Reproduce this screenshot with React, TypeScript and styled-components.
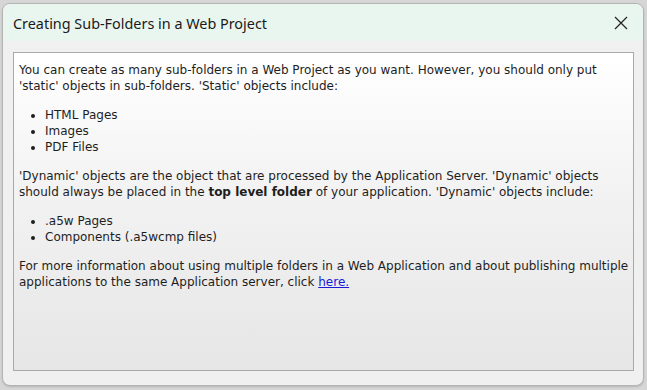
import React from 'react';
import styled, { createGlobalStyle } from 'styled-components';

const GlobalStyle = createGlobalStyle`
  html, body {
    margin: 0;
    padding: 0;
    background: #d6d6d6;
  }
`;

const Page = styled.div`
  width: 647px;
  height: 390px;
  padding: 3px 3px 4px 2px;
  box-sizing: border-box;
  display: flex;
`;

const Window = styled.div`
  flex: 1;
  display: flex;
  flex-direction: column;
  background: #f0f0f0;
  border: 1px solid #b4b4b4;
  border-radius: 8px;
  overflow: hidden;
  box-shadow: 0 1px 2px rgba(0, 0, 0, 0.15);
`;

const TitleBar = styled.div`
  height: 37px;
  flex-shrink: 0;
  display: flex;
  align-items: center;
  justify-content: space-between;
  padding: 1px 14px 0 10px;
  box-sizing: border-box;
  background: #e9f6ef;
`;

const Title = styled.div`
  font-family: 'Noto Sans', 'Open Sans', sans-serif;
  font-size: 14.4px;
  color: #1a1a1a;
`;

const CloseButton = styled.button`
  border: none;
  background: none;
  padding: 0;
  width: 16px;
  height: 16px;
  display: flex;
  align-items: center;
  justify-content: center;
  cursor: pointer;
`;

const Body = styled.div`
  flex: 1;
  display: flex;
  padding: 11px 10px 14px 10px;
`;

const Panel = styled.div`
  flex: 1;
  border: 1px solid #a9a9a9;
  background: linear-gradient(to bottom, #ffffff 0%, #f2f2f2 45%, #e6e6e6 100%);
  padding: 9px 5px 0 5px;
  font-family: 'DejaVu Sans', sans-serif;
  font-size: 12px;
  line-height: 16px;
  color: #1e1e1e;
  white-space: nowrap;
`;

const Paragraph = styled.p`
  margin: 0 0 13px 0;
`;

const BulletList = styled.ul`
  margin: 0 0 13px 0;
  padding: 0 0 0 26px;
  list-style: disc;
`;

const Link = styled.a`
  color: #1a1ad6;
  text-decoration: underline;
`;

const Notes: React.FC = () => (
  <Page>
    <GlobalStyle />
    <Window>
      <TitleBar>
        <Title>Creating Sub-Folders in a Web Project</Title>
        <CloseButton aria-label="Close">
          <svg width="14" height="14" viewBox="0 0 14 14">
            <path d="M1 1 L13 13 M13 1 L1 13" stroke="#222" strokeWidth="1.2" />
          </svg>
        </CloseButton>
      </TitleBar>
      <Body>
        <Panel>
          <Paragraph>
            You can create as many sub-folders in a Web Project as you want. However, you should only put
            <br />
            'static' objects in sub-folders. 'Static' objects include:
          </Paragraph>
          <BulletList>
            <li>HTML Pages</li>
            <li>Images</li>
            <li>PDF Files</li>
          </BulletList>
          <Paragraph>
            'Dynamic' objects are the object that are processed by the Application Server. 'Dynamic' objects
            <br />
            should always be placed in the <b>top level folder</b> of your application. 'Dynamic' objects include:
          </Paragraph>
          <BulletList>
            <li>.a5w Pages</li>
            <li>Components (.a5wcmp files)</li>
          </BulletList>
          <Paragraph>
            For more information about using multiple folders in a Web Application and about publishing multiple
            <br />
            applications to the same Application server, click <Link href="#">here.</Link>
          </Paragraph>
        </Panel>
      </Body>
    </Window>
  </Page>
);

export default Notes;
